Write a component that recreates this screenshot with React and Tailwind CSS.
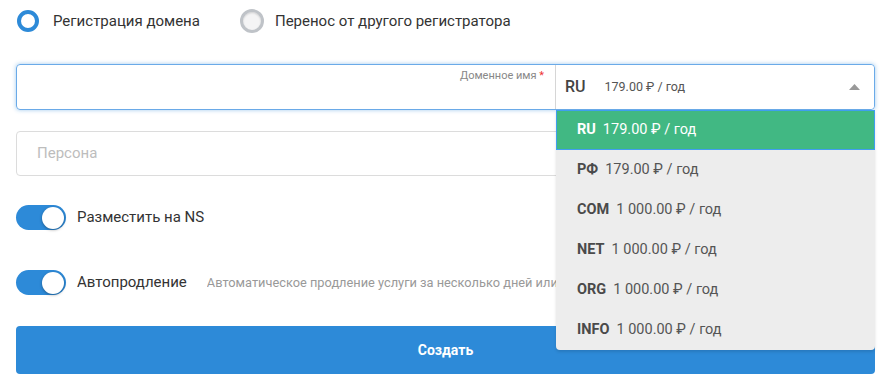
import React from 'react';

const zones = [
  { code: 'RU', price: '179.00 ₽ / год' },
  { code: 'РФ', price: '179.00 ₽ / год' },
  { code: 'COM', price: '1 000.00 ₽ / год' },
  { code: 'NET', price: '1 000.00 ₽ / год' },
  { code: 'ORG', price: '1 000.00 ₽ / год' },
  { code: 'INFO', price: '1 000.00 ₽ / год' },
];

function Toggle() {
  return (
    <span className="relative inline-block w-[50px] h-[25px] rounded-full bg-[#2d8ad8] shrink-0">
      <span className="absolute right-[2px] top-[1.5px] w-[22px] h-[22px] rounded-full bg-white shadow-[0_1px_3px_rgba(0,0,0,0.35)]" />
    </span>
  );
}

export default function App() {
  return (
    <div className="w-[884px] h-[390px] bg-white pl-4 pr-[9px] pt-[10px] overflow-hidden text-[#333]" style={{ fontFamily: 'Roboto, "Noto Sans", sans-serif' }}>
      {/* radios */}
      <div className="flex items-center h-[22px]">
        <label className="flex items-center gap-[14px] ml-[1px]">
          <span className="w-[22px] h-[22px] rounded-full border-[4px] border-[#2d8ad8] bg-white" />
          <span className="text-[15px]">Регистрация домена</span>
        </label>
        <label className="flex items-center gap-[11px] ml-[40px]">
          <span className="w-[24px] h-[24px] rounded-full border-[3px] border-[#bfc3c8] bg-[#f4f4f5] shadow-[inset_0_1px_2px_rgba(0,0,0,0.15)]" />
          <span className="text-[15px]">Перенос от другого регистратора</span>
        </label>
      </div>

      {/* domain row */}
      <div className="relative flex mt-[32px] h-[46px] rounded-[4px] border border-[#6aaae8] shadow-[0_0_4px_rgba(45,138,216,0.45)] z-10">
        <div className="flex-1 relative">
          <span className="absolute right-[11px] top-[3px] text-[11px] text-[#888]">
            Доменное имя <span className="text-[#e33]">*</span>
          </span>
        </div>
        <div className="relative w-[319px] border-l border-[#d6d6d6] bg-white rounded-r-[4px]">
          <div className="flex items-center h-full pl-[9px]">
            <span className="text-[16px] font-medium text-[#444]">RU</span>
            <span className="ml-[19px] text-[12.5px] text-[#555]">179.00 ₽ / год</span>
            <svg className="ml-auto mr-[14px]" width="11" height="6" viewBox="0 0 11 6">
              <path d="M0 6 L5.5 0 L11 6 Z" fill="#999" />
            </svg>
          </div>
          {/* dropdown */}
          <div className="absolute left-0 right-[-1px] top-full mt-[1px] bg-[#ededed] rounded-b-[4px] shadow-[0_2px_3px_rgba(0,0,0,0.12)]">
            {zones.map((z, i) => (
              <div
                key={z.code}
                className={
                  i === 0
                    ? 'flex items-center h-[40px] pl-[20px] bg-[#41b883] text-white border border-[#3f9ef0]'
                    : 'flex items-center h-[40px] pl-[21px] text-[#555]'
                }
              >
                <span className={i === 0 ? 'text-[14.5px] font-bold' : 'text-[14.5px] font-bold text-[#4a4a4a]'}>{z.code}</span>
                <span className="ml-[7px] text-[14.5px]">{z.price}</span>
              </div>
            ))}
          </div>
        </div>
      </div>

      {/* persona */}
      <div className="mt-[21px] h-[45px] rounded-[4px] border border-[#dcdcdc] flex items-center pl-[20px]">
        <span className="text-[15px] text-[#bdbdbd]">Персона</span>
      </div>

      {/* toggles */}
      <div className="flex items-center gap-[11px] mt-[29px] h-[25px]">
        <Toggle />
        <span className="text-[15px]">Разместить на NS</span>
      </div>
      <div className="flex items-center mt-[40px] h-[25px]">
        <Toggle />
        <span className="ml-[11px] text-[15px]">Автопродление</span>
        <span className="ml-[20px] w-[350px] overflow-hidden text-[12.8px] text-[#999] whitespace-nowrap">
          Автоматическое продление услуги за несколько дней или
        </span>
      </div>

      {/* submit */}
      <button className="mt-[31px] w-full h-[48px] rounded-[4px] bg-[#2d8ad8] text-white text-[14px] font-bold">
        Создать
      </button>
    </div>
  );
}
